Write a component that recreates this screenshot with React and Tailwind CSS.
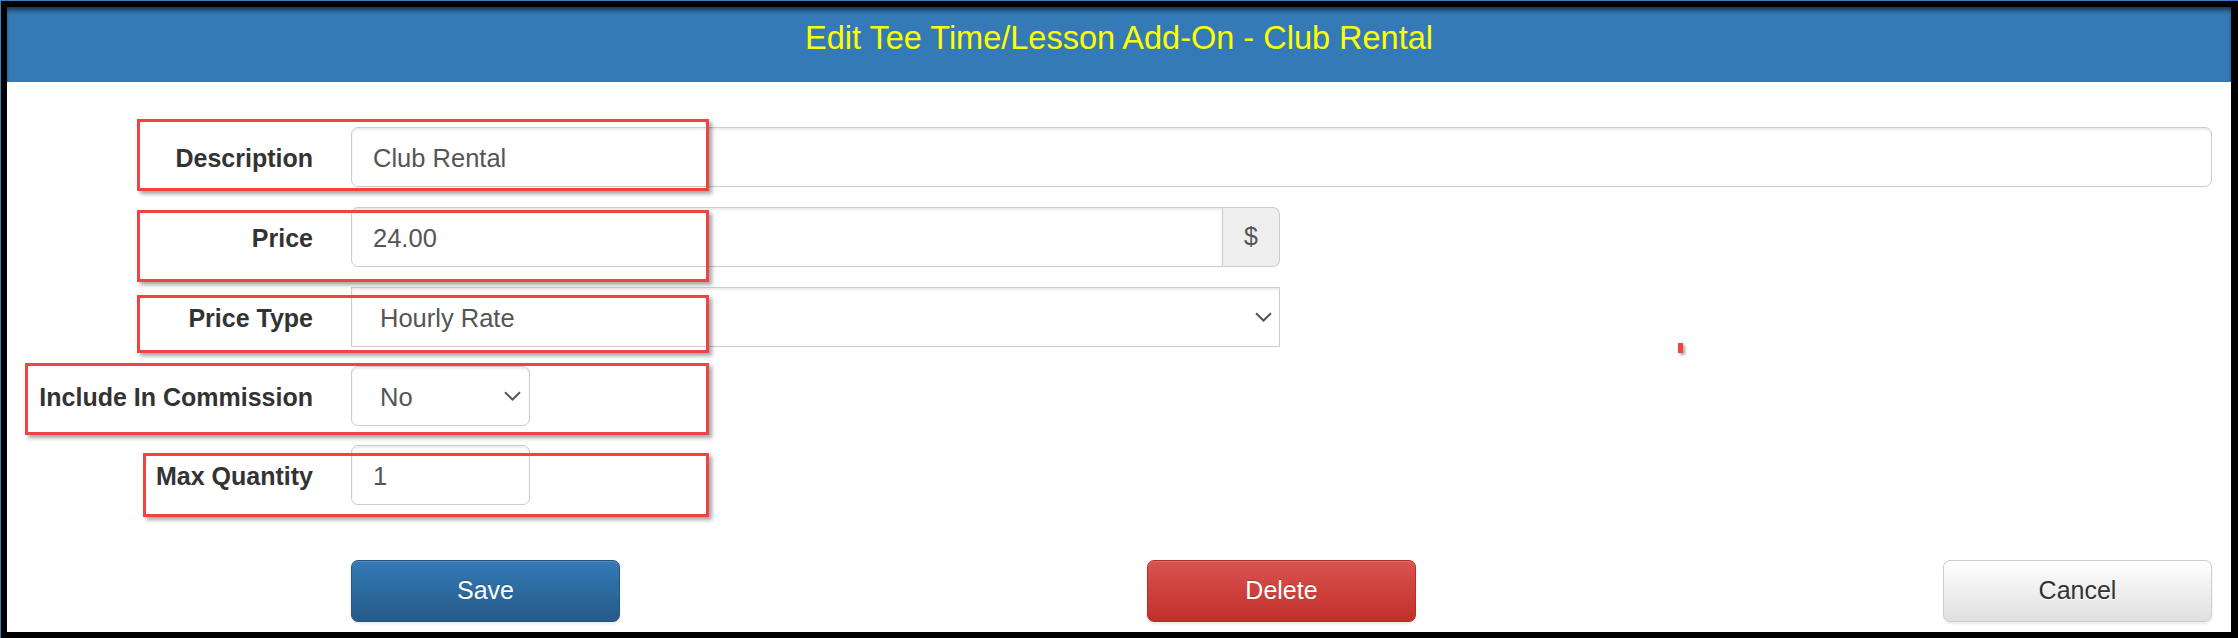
import React from "react";

function Chevron() {
  return (
    <svg width="17" height="10" viewBox="0 0 17 10" className="shrink-0">
      <polyline points="1,1.2 8.5,8.5 16,1.2" fill="none" stroke="#555" strokeWidth="2" />
    </svg>
  );
}

function Row({ label, children, className = "" }) {
  return (
    <div className={`flex items-center h-[60px] ${className}`}>
      <div className="w-[306px] shrink-0 text-right font-bold text-[25px] leading-none text-[#333] translate-y-[1px]">
        {label}
      </div>
      <div className="ml-[38px] flex-1 flex">{children}</div>
    </div>
  );
}

const inputBase =
  "h-[60px] border border-[#ccc] bg-white shadow-[inset_0_2px_2px_rgba(0,0,0,0.075)] flex items-center text-[25.5px] text-[#555]";

function RedBox({ cls }) {
  return (
    <div
      className={`absolute border-[3px] border-[#f24343] shadow-[3px_3px_4px_rgba(0,0,0,0.35)] pointer-events-none ${cls}`}
    />
  );
}

export default function App() {
  return (
    <div className="relative w-[2238px] h-[638px] bg-black shadow-[inset_1px_1px_0_#3a7fc0] pt-[7px] pl-[7px] pr-[7px] pb-[6px] font-['Liberation_Sans',Arial,sans-serif]">
      <div className="flex flex-col h-full bg-white">
        <div className="h-[75px] shrink-0 bg-[#337ab7] shadow-[inset_0_5px_5px_-2px_rgba(0,0,0,0.6)] pt-[14px] text-center">
          <div className="text-[32.5px] leading-[35px] text-[#ffff00]">
            Edit Tee Time/Lesson Add-On - Club Rental
          </div>
        </div>

        <div className="pt-[45px] pr-[19px]">
          <Row label="Description">
            <div className={`${inputBase} flex-1 rounded-[7px] pl-[21px]`}>
              <span className="translate-y-[1px]">Club Rental</span>
            </div>
          </Row>

          <Row label="Price" className="mt-[20px]">
            <div className="flex w-[929px]">
              <div className={`${inputBase} flex-1 rounded-l-[7px] pl-[21px]`}>
                <span className="translate-y-[1px]">24.00</span>
              </div>
              <div className="h-[60px] w-[57px] border border-l-0 border-[#ccc] bg-[#eee] rounded-r-[7px] flex items-center justify-center text-[25px] text-[#555]">
                $
              </div>
            </div>
          </Row>

          <Row label="Price Type" className="mt-[20px]">
            <div className={`${inputBase} w-[929px] pl-[28px] pr-[7px] justify-between`}>
              <span className="translate-y-[1px]">Hourly Rate</span>
              <Chevron />
            </div>
          </Row>

          <Row label="Include In Commission" className="mt-[19px]">
            <div className={`${inputBase} w-[179px] rounded-[7px] pl-[28px] pr-[8px] justify-between`}>
              <span className="translate-y-[1px]">No</span>
              <Chevron />
            </div>
          </Row>

          <Row label="Max Quantity" className="mt-[19px]">
            <div className={`${inputBase} w-[179px] rounded-[7px] pl-[21px]`}>
              <span className="translate-y-[1px]">1</span>
            </div>
          </Row>

          <div className="ml-[344px] mt-[55px] flex justify-between">
            <div className="w-[269px] h-[62px] rounded-[7px] border border-[#245580] bg-gradient-to-b from-[#337ab7] to-[#265a88] shadow-[inset_0_1px_0_rgba(255,255,255,0.15),0_2px_2px_rgba(0,0,0,0.075)] flex items-center justify-center text-[25px] text-white [text-shadow:0_-1px_0_rgba(0,0,0,0.2)]">
              Save
            </div>
            <div className="w-[269px] h-[62px] rounded-[7px] border border-[#b92c28] bg-gradient-to-b from-[#d9534f] to-[#c12e2a] shadow-[inset_0_1px_0_rgba(255,255,255,0.15),0_2px_2px_rgba(0,0,0,0.075)] flex items-center justify-center text-[25px] text-white [text-shadow:0_-1px_0_rgba(0,0,0,0.2)]">
              Delete
            </div>
            <div className="w-[269px] h-[62px] rounded-[7px] border border-[#ccc] bg-gradient-to-b from-white to-[#e0e0e0] shadow-[inset_0_1px_0_rgba(255,255,255,0.15),0_2px_2px_rgba(0,0,0,0.075)] flex items-center justify-center text-[25px] text-[#333] [text-shadow:0_1px_0_#fff]">
              Cancel
            </div>
          </div>
        </div>
      </div>

      <RedBox cls="left-[137px] top-[119px] w-[572px] h-[72px]" />
      <RedBox cls="left-[137px] top-[210px] w-[572px] h-[72px]" />
      <RedBox cls="left-[137px] top-[295px] w-[572px] h-[58px]" />
      <RedBox cls="left-[25px] top-[363px] w-[684px] h-[72px]" />
      <RedBox cls="left-[143px] top-[453px] w-[566px] h-[64px]" />
      <div className="absolute left-[1678px] top-[343px] w-[5px] h-[10px] bg-[#f24343] shadow-[2px_2px_3px_rgba(0,0,0,0.35)]" />
    </div>
  );
}
